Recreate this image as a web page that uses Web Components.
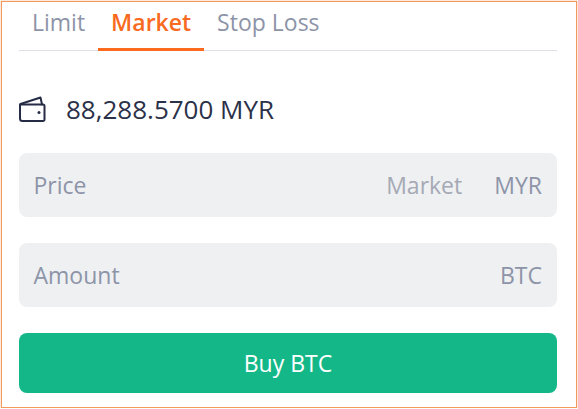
<!DOCTYPE html>
<html><head><meta charset="utf-8"><style>
html,body{margin:0;padding:0;background:#fff}
body{font-family:"Open Sans","Liberation Sans",sans-serif}
</style></head><body>
<order-panel>
  <tab-bar>
    <tab-item>Limit</tab-item>
    <tab-item active>Market</tab-item>
    <tab-item>Stop Loss</tab-item>
  </tab-bar>
  <balance-row>88,288.5700 MYR</balance-row>
  <input-field label="Price" hint="Market" unit="MYR"></input-field>
  <input-field label="Amount" unit="BTC"></input-field>
  <buy-button>Buy BTC</buy-button>
</order-panel>
<script>
function def(name,html,init){
  customElements.define(name,class extends HTMLElement{
    constructor(){super();this.attachShadow({mode:'open'}).innerHTML=html;}
    connectedCallback(){if(init)init(this);}
  });
}
def('order-panel',`<style>
:host{display:flex;flex-direction:column;box-sizing:border-box;width:576px;height:407px;margin:1px 0 0 1px;border:1px solid #f2995c;box-shadow:0 0 0 .5px rgba(244,162,108,.45);padding:0 19px 0 17px;background:#fff}
</style><slot></slot>`);
def('tab-bar',`<style>
:host{display:flex;height:48px;border-bottom:1px solid #dfe1ea}
</style><slot></slot>`);
def('tab-item',`<style>
:host{display:block;box-sizing:border-box;height:49px;padding:0 13px;font-size:23px;line-height:40px;color:#8d94a8;margin-bottom:-1px}
:host([active]){color:#f96a21;font-weight:600;border-bottom:3px solid #fb6a1e}
</style><slot></slot>`);
def('balance-row',`<style>
:host{display:flex;align-items:center;gap:20px;height:34px;margin-top:41px;margin-bottom:27px;font-size:26px;color:#2b3148}
svg{display:block;width:27px;height:27px;flex:none}
</style><svg viewBox="0 0 27 27" fill="none" stroke="#262c45" stroke-width="2" stroke-linejoin="round" stroke-linecap="round"><path d="M1 8.500h23a1.500 1.500 0 0 1 1.500 1.500v13.500a1.500 1.500 0 0 1-1.500 1.500H3.500a2.500 2.500 0 0 1-2.500-2.500z"/><path d="M1.500 8L21.500 1.500l1.500 7"/><circle cx="20" cy="16.500" r="1.500" fill="#262c45" stroke="none"/></svg><slot></slot>`);
def('input-field',`<style>
:host{display:flex;align-items:center;box-sizing:border-box;height:64px;margin-bottom:26px;padding:0 15px 0 14.500px;background:#eff0f2;border-radius:8px;font-size:23px;color:#8d94a8}
.l{flex:1}.h{color:#a5a9b5;margin-right:32px}.h:empty{display:none}
</style><span class="l"></span><span class="h"></span><span class="u"></span>`,el=>{
  const s=el.shadowRoot;
  s.querySelector('.l').textContent=el.getAttribute('label')||'';
  s.querySelector('.h').textContent=el.getAttribute('hint')||'';
  s.querySelector('.u').textContent=el.getAttribute('unit')||'';
});
def('buy-button',`<style>
:host{display:flex;align-items:center;justify-content:center;height:60px;background:#14b888;border-radius:8px;color:#fff;font-size:23px;box-sizing:border-box}
</style><slot></slot>`);
</script>
</body></html>
